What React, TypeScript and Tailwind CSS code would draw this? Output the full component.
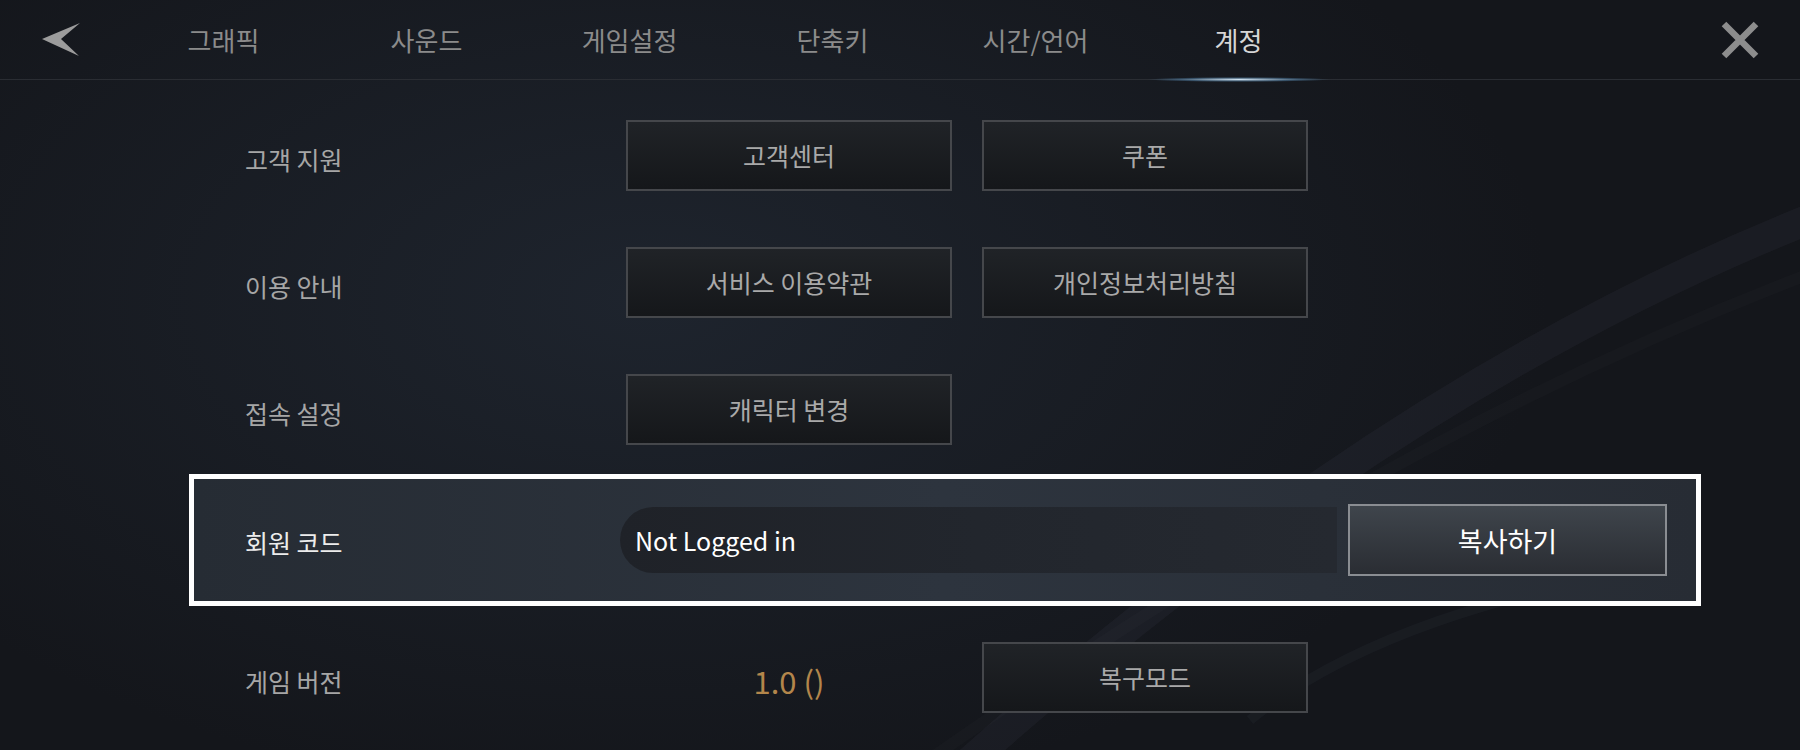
import React from 'react';

const tabs = ['그래픽', '사운드', '게임설정', '단축키', '시간/언어', '계정'];

const GameButton = ({ label }: { label: string }) => (
  <button className="flex h-[71px] w-[326px] items-center justify-center border-2 border-[#45474b] bg-gradient-to-b from-[#202327] to-[#15171a] text-[25px] leading-none text-[#a9a9a9]">
    {label}
  </button>
);

const Row = ({ label, children }: { label: string; children: React.ReactNode }) => (
  <div className="flex items-center">
    <div className="w-[437px] pl-[56px] pt-[8px] text-[25px] leading-none text-[#a6a6a6]">{label}</div>
    <div className="flex gap-[30px]">{children}</div>
  </div>
);

export default function App() {
  return (
    <div className="relative h-[750px] w-[1800px] overflow-hidden bg-[#14161b] font-['Noto_Sans_CJK_KR','Noto_Sans',sans-serif]">
      {/* background light */}
      <div className="pointer-events-none absolute inset-0 bg-[radial-gradient(ellipse_900px_500px_at_650px_300px,rgba(40,50,64,0.5),transparent)]" />
      <svg className="pointer-events-none absolute inset-0" width="1800" height="750" viewBox="0 0 1800 750">
        <path d="M 960 770 C 1150 600, 1450 360, 1820 215" stroke="rgba(150,160,190,0.05)" strokeWidth="30" fill="none" />
        <path d="M 900 780 C 1100 640, 1420 420, 1820 270" stroke="rgba(150,160,190,0.025)" strokeWidth="12" fill="none" />
        <path d="M 1250 720 C 1350 640, 1500 590, 1700 560" stroke="rgba(160,170,200,0.04)" strokeWidth="10" fill="none" />
      </svg>

      <div className="relative">
        {/* header */}
        <div className="flex h-[80px] items-center border-b border-[#2a2d33]">
          <div className="flex w-[122px] items-center pl-[42px]">
            <svg width="40" height="36" viewBox="0 0 40 36">
              <polygon points="38,1 0,17 37,34 19,17" fill="#9c9c9c" />
            </svg>
          </div>
          {tabs.map((t, i) => (
            <div key={t} className="relative flex h-full w-[203px] items-center justify-center">
              <span className={`text-[26px] leading-none ${i === 5 ? 'text-[#d6d6d6]' : 'text-[#8b8b8b]'}`}>{t}</span>
              {i === 5 && (
                <div className="absolute bottom-[-3px] left-1/2 h-[5px] w-[184px] -translate-x-1/2 rounded-full bg-[radial-gradient(ellipse_at_center,rgba(215,235,250,0.95),rgba(90,140,180,0.5)_45%,transparent_70%)]" />
              )}
            </div>
          ))}
          <div className="ml-auto mr-[40px] flex items-center">
            <svg width="40" height="38" viewBox="0 0 40 38">
              <path d="M4 3 L36 35 M36 3 L4 35" stroke="#8d8d8d" strokeWidth="6.5" />
            </svg>
          </div>
        </div>

        {/* content */}
        <div className="ml-[189px] flex w-[1512px] flex-col pt-[40px]">
          <Row label="고객 지원">
            <GameButton label="고객센터" />
            <GameButton label="쿠폰" />
          </Row>
          <div className="mt-[56px]">
            <Row label="이용 안내">
              <GameButton label="서비스 이용약관" />
              <GameButton label="개인정보처리방침" />
            </Row>
          </div>
          <div className="mt-[56px]">
            <Row label="접속 설정">
              <GameButton label="캐릭터 변경" />
            </Row>
          </div>

          {/* highlighted member code row */}
          <div className="mt-[29px] flex h-[132px] items-center border-[5px] border-white bg-gradient-to-r from-[#262c34] via-[#2d343e] to-[#272c34]">
            <div className="w-[426px] pl-[51px] pt-[4px] text-[25px] leading-none text-[#ececec]">회원 코드</div>
            <div className="flex h-[66px] w-[717px] items-center rounded-l-full bg-gradient-to-r from-[#1f2228] via-[#22262d] to-[#252930] pl-[15px] text-[25px] leading-none text-white">
              Not Logged in
            </div>
            <button className="ml-[11px] flex h-[72px] w-[319px] items-center justify-center border-2 border-[#8a8d92] bg-gradient-to-b from-[#3f454c] to-[#2a2d33] text-[27px] leading-none text-white">
              복사하기
            </button>
          </div>

          <div className="mt-[36px] flex items-center">
            <div className="w-[437px] pl-[56px] pt-[8px] text-[25px] leading-none text-[#a6a6a6]">게임 버전</div>
            <div className="flex gap-[30px]">
              <div className="flex w-[326px] items-center justify-center pt-[6px] text-[31px] leading-none text-[#b3864b]">1.0 ()</div>
              <GameButton label="복구모드" />
            </div>
          </div>
        </div>
      </div>
    </div>
  );
}
